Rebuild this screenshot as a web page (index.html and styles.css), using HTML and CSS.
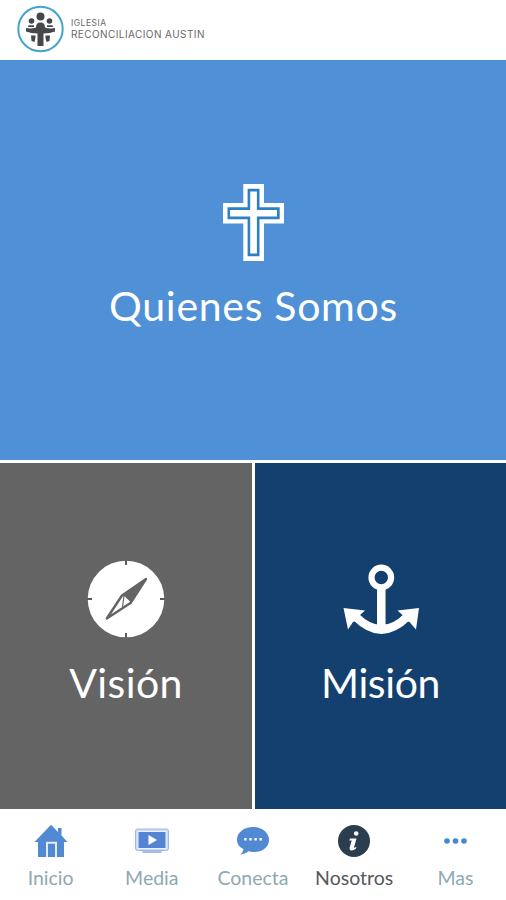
FILE: index.html
```html
<!DOCTYPE html>
<html lang="es">
<head>
  <meta charset="utf-8">
  <title>Iglesia Reconciliacion Austin</title>
  <link rel="stylesheet" href="styles.css">
</head>
<body>

  <header class="header">
    <svg class="logo" viewBox="0 0 48 48">
      <circle cx="23.500" cy="24" r="22.200" fill="#fff" stroke="#43a3c9" stroke-width="2"/>
      <g fill="#46474b">
        <circle cx="23.500" cy="11.500" r="4"/>
        <circle cx="14.500" cy="16" r="2.800"/>
        <circle cx="32.500" cy="16" r="2.800"/>
        <path d="M9 23Q14 24 19 22.500Q19 17.500 23.500 17.500Q28 17.500 28 22.500Q33 24 38 23V26.500Q33 28.500 26.500 28.500V41H20.500V28.500Q14 28.500 9 26.500Z"/>
        <path d="M11.500 20.200H17V22H11ZM30 20.200H35.500L36 22H30ZM14 30.500H18.500V32.500L17.500 37L14.500 36ZM28.500 30.500H33L32.500 36L29.500 37L28.500 33Z"/>
      </g>
    </svg>
    <div class="brand">
      <span class="brand-small">IGLESIA</span>
      <span class="brand-name">RECONCILIACION AUSTIN</span>
    </div>
  </header>

  <main class="tiles">
    <a class="tile tile-about">
      <svg class="icon-cross" viewBox="0 0 61 77">
        <path d="M20.300 0H41V19H61V39.500H41V77H20.300V39.500H0V19H20.300Z" fill="#fff"/>
        <path d="M24.600 4.700H36.500V23.300H56.700V35.200H36.500V72.300H24.600V35.200H4.500V23.300H24.600Z" fill="#2c80c6"/>
        <path d="M27.200 7.500H33.900V26H54V32.600H33.900V69.500H27.200V32.600H7V26H27.200Z" fill="#fff"/>
      </svg>
      <span class="tile-label label-about">Quienes Somos</span>
    </a>
    <a class="tile tile-vision">
      <svg class="icon-tile" viewBox="0 0 78 78">
        <circle cx="39" cy="39" r="38.300" fill="#fff"/>
        <path d="M39 0V5M39 73V78M0 39H5M73 39H78" stroke="#5b5b5b" stroke-width="2"/>
        <path d="M59 19L35 35.500L19.800 58.500L43.500 43Z" fill="#fff" stroke="#646464" stroke-width="2.400" stroke-linejoin="round"/>
        <path d="M35 35.500L37 35.800L43.500 42L44.500 43L59 19Z" fill="#646464"/>
        <path d="M37 36L35.500 47" stroke="#646464" stroke-width="1.200"/>
      </svg>
      <span class="tile-label label-vision">Visión</span>
    </a>
    <a class="tile tile-mision">
      <svg class="icon-tile" viewBox="0 0 78 78">
        <circle cx="39.300" cy="17.500" r="9.800" fill="none" stroke="#fff" stroke-width="6.200"/>
        <path d="M39.300 28V69M14 57Q39.300 82 65 57" fill="none" stroke="#fff" stroke-width="8.500"/>
        <path d="M1.500 48L23 50.500L17.500 55.500L19 59L11 62L6 69.500ZM77 48L55.500 50.500L61 55.500L60 59L67.500 62L74 69.500Z" fill="#fff"/>
      </svg>
      <span class="tile-label label-mision">Misión</span>
    </a>
  </main>

  <nav class="tabs">
    <a class="tab">
      <svg class="tab-icon" viewBox="0 0 34 34">
        <path d="M17 .8L24 8V4H27.500V11.500L33.500 18H30V33H4V18H.5Z" fill="#5289d3"/>
        <path d="M13 33V18.800H22V33" fill="none" stroke="#e4ecfb" stroke-width="2"/>
      </svg>
      <span>Inicio</span>
    </a>
    <a class="tab">
      <svg class="tab-icon" viewBox="0 0 34 34">
        <rect x=".5" y="5" width="33" height="21.500" rx="2" fill="#cddbf5" stroke="#9db8e6"/>
        <rect x="3" y="7.500" width="28" height="17" fill="#5484d2" stroke="#edf3fd"/>
        <path d="M13.500 11L22 16L13.500 21Z" fill="#fff"/>
        <path d="M7.500 28H26.500" stroke="#9db5df" stroke-width="1.800"/>
      </svg>
      <span>Media</span>
    </a>
    <a class="tab">
      <svg class="tab-icon" viewBox="0 0 34 34">
        <path d="M17 3C26 3 33 8.500 33 16C33 23.500 26 28 18 28C16 28 14 27.800 12.500 27.300C10.500 29 8 30 4.500 30.500C6 29 7 27.500 7.500 25C3 23 1 20 1 15.500C1 8.500 8 3 17 3Z" fill="#5289d3"/>
        <path d="M8.200 15.300H26.500" fill="none" stroke="#fff" stroke-width="2.400" stroke-dasharray="2.400 2.700"/>
      </svg>
      <span>Conecta</span>
    </a>
    <a class="tab active">
      <svg class="tab-icon" viewBox="0 0 34 34">
        <circle cx="17" cy="17" r="16" fill="#2b3e50"/>
        <circle cx="19.200" cy="9.500" r="2.300" fill="#fff"/>
        <path d="M13 14.500H19.500L16.800 24L19.500 22.800L18.800 24.800Q16 27 13.500 26.300Q12 25.500 12.800 23L14.700 16.500H12.300Z" fill="#fff"/>
      </svg>
      <span>Nosotros</span>
    </a>
    <a class="tab">
      <svg class="tab-icon" viewBox="0 0 34 34">
        <g fill="#4587d2">
          <circle cx="9" cy="17" r="2.800"/>
          <circle cx="17.500" cy="17" r="2.800"/>
          <circle cx="26" cy="17" r="2.800"/>
        </g>
      </svg>
      <span>Mas</span>
    </a>
  </nav>

</body>
</html>
```
FILE: styles.css
```css
* {
  box-sizing: border-box;
}

body {
  margin: 0;
  height: 900px;
  display: flex;
  flex-direction: column;
  background-color: #fff;
  font-family: Lato, sans-serif;
}

.header {
  height: 60px;
  padding: 5px 0 0 17px;
  display: flex;
  gap: 6px;
}

.logo {
  width: 48px;
  height: 48px;
}

.brand {
  display: flex;
  flex-direction: column;
  padding-top: 13px;
  font-family: Inter, sans-serif;
  color: #68686c;
  white-space: nowrap;
}

.brand-small {
  font-size: 8.5px;
  line-height: 11px;
  letter-spacing: 0.5px;
}

.brand-name {
  font-size: 10px;
  line-height: 11px;
  letter-spacing: 0.42px;
}

/* big tile on top, two smaller ones below; the white gaps are the separators */
.tiles {
  height: 749px;
  display: grid;
  grid-template-columns: 252px 251px;
  grid-template-rows: 400px 346px;
  gap: 3px;
}

.tile {
  display: flex;
  flex-direction: column;
  align-items: center;
  color: #fff;
}

.tile-about {
  grid-column: 1 / 3;
  padding-top: 124px;
  background-color: #4f90d6;
}

.tile-vision {
  padding-top: 97px;
  background-color: #646464;
}

.tile-mision {
  padding-top: 97px;
  background-color: #144070;
}

.icon-cross {
  width: 61px;
  height: 77px;
}

.icon-tile {
  width: 78px;
  height: 78px;
}

.tile-label {
  font-size: 41px;
  line-height: 50px;
  margin-top: 20px;
}

.label-about {
  letter-spacing: 0.7px;
  padding-left: 1px;
}

.label-vision {
  letter-spacing: 0.4px;
}

.label-mision {
  letter-spacing: -0.4px;
}

.tabs {
  height: 91px;
  padding-top: 15px;
  display: grid;
  grid-template-columns: repeat(5, 1fr);
}

.tab {
  display: flex;
  flex-direction: column;
  align-items: center;
  font-size: 19.5px;
  line-height: 24px;
  color: #8fa8b4;
}

.tab-icon {
  width: 34px;
  height: 34px;
  margin-bottom: 8px;
}

.tab.active {
  color: #55585b;
}
```
